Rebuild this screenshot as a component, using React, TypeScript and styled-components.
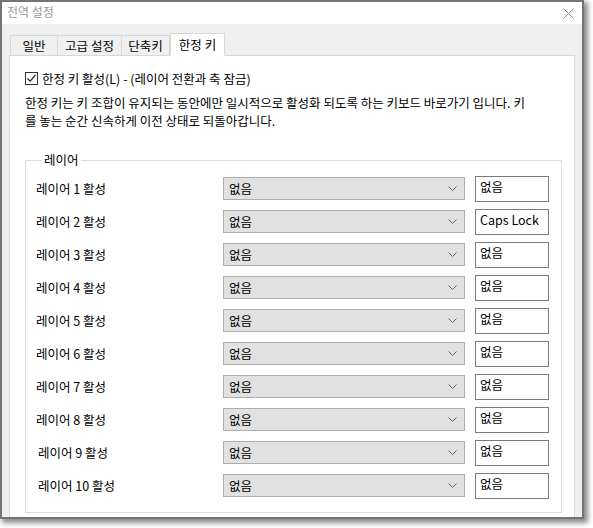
import React from "react";
import styled, { createGlobalStyle } from "styled-components";

const Global = createGlobalStyle`
  html, body { margin: 0; padding: 0; background: #ffffff; }
  body { font-family: "Noto Sans CJK KR", "Noto Sans", sans-serif; font-size: 12px; color: #000; }
  * { box-sizing: border-box; }
`;

const Page = styled.div`
  width: 593px;
  height: 528px;
  overflow: hidden;
`;

const Window = styled.div`
  width: 584px;
  height: 519px;
  border: 2px solid #747474;
  background: #f0f0f0;
  box-shadow: 3px 3px 5px 1px rgba(0, 0, 0, 0.45);
  display: flex;
  flex-direction: column;
  overflow: hidden;
`;

const TitleBar = styled.div`
  height: 22px;
  background: #ffffff;
  display: flex;
  align-items: center;
  justify-content: space-between;
  padding: 0 8px 0 5px;
  flex-shrink: 0;
`;

const Title = styled.span`
  color: #9a9a9a;
  font-size: 12px;
  line-height: 1;
  margin-top: -2px;
`;

const Body = styled.div`
  flex: 1;
  min-height: 0;
  padding: 8px 7px 0 7px;
  display: flex;
  flex-direction: column;
`;

const TabStrip = styled.div`
  display: flex;
  align-items: flex-end;
  height: 23px;
  flex-shrink: 0;
  padding-left: 1px;
  position: relative;
  z-index: 1;
`;

const Tab = styled.div<{ $active?: boolean; $first?: boolean; $w: number }>`
  width: ${(p) => p.$w}px;
  height: ${(p) => (p.$active ? "23px" : "21px")};
  display: flex;
  align-items: center;
  justify-content: center;
  background: ${(p) => (p.$active ? "#ffffff" : "#f0f0f0")};
  border: 1px solid #d9d9d9;
  border-bottom-color: ${(p) => (p.$active ? "#ffffff" : "#d9d9d9")};
  border-left-width: ${(p) => (p.$first || p.$active ? "1px" : "0")};
  margin-bottom: -1px;
  font-size: 12.5px;
  white-space: nowrap;
`;

const Panel = styled.div`
  flex: 1;
  min-height: 0;
  width: 566px;
  background: #ffffff;
  border: 1px solid #d9d9d9;
  border-bottom: none;
  padding: 14px 12px 4px 15px;
  display: flex;
  flex-direction: column;
`;

const CheckRow = styled.label`
  display: flex;
  align-items: center;
  gap: 4px;
  height: 16px;
  font-size: 12.5px;
`;

const Box = styled.span`
  width: 13px;
  height: 13px;
  border: 1px solid #333;
  background: #fff;
  display: inline-flex;
  align-items: center;
  justify-content: center;
`;

const Desc = styled.div`
  margin-top: 8px;
  display: flex;
  flex-direction: column;
`;

const DescLine = styled.div`
  height: 18px;
  line-height: 18px;
  font-size: 12.5px;
  white-space: nowrap;
`;

const Group = styled.fieldset`
  margin: 23px 0 0 0;
  padding: 5px 0 0 10px;
  width: 537px;
  border: 1px solid #dcdcdc;
  flex: 1;
  min-height: 0;
  min-width: 0;
`;

const Legend = styled.legend`
  padding: 0 2px;
  margin-left: 6px;
  font-size: 12.5px;
  line-height: 14px;
  color: #000;
`;

const Rows = styled.div`
  display: flex;
  flex-direction: column;
`;

const Row = styled.div`
  display: flex;
  align-items: center;
  height: 33px;
`;

const RowLabel = styled.div<{ $indent?: number }>`
  width: 187px;
  flex-shrink: 0;
  padding-left: ${(p) => p.$indent ?? 0}px;
  font-size: 12.5px;
  white-space: nowrap;
`;

const Combo = styled.div`
  width: 242px;
  flex-shrink: 0;
  height: 23px;
  background: #e1e1e1;
  border: 1px solid #adadad;
  display: flex;
  align-items: center;
  justify-content: space-between;
  padding: 0 7px 0 5px;
  font-size: 12.5px;
`;

const TextBox = styled.div`
  width: 74px;
  flex-shrink: 0;
  margin-left: 10px;
  height: 26px;
  border: 1px solid #7a7a7a;
  background: #fff;
  padding: 1px 0 0 4px;
  font-size: 12.5px;
  line-height: 18px;
  white-space: nowrap;
`;

const Chevron = () => (
  <svg width="9" height="6" viewBox="0 0 9 6">
    <path d="M0.5 0.5 L4.5 4.5 L8.5 0.5" fill="none" stroke="#606060" strokeWidth="1" />
  </svg>
);

const CloseIcon = () => (
  <svg width="11" height="11" viewBox="0 0 11 11">
    <path d="M0.5 0.5 L10.5 10.5 M10.5 0.5 L0.5 10.5" stroke="#8a8a8a" strokeWidth="1" />
  </svg>
);

const rows = Array.from({ length: 10 }, (_, i) => ({
  n: i + 1,
  key: i === 1 ? "Caps Lock" : "없음",
}));

const tabs = [
  { t: "일반", w: 48 },
  { t: "고급 설정", w: 64 },
  { t: "단축키", w: 48 },
];

export default function App() {
  return (
    <Page>
      <Global />
      <Window>
        <TitleBar>
          <Title>전역 설정</Title>
          <CloseIcon />
        </TitleBar>
        <Body>
          <TabStrip>
            {tabs.map((t, i) => (
              <Tab key={t.t} $w={t.w} $first={i === 0}>
                {t.t}
              </Tab>
            ))}
            <Tab $active $w={55}>
              한정 키
            </Tab>
          </TabStrip>
          <Panel>
            <CheckRow>
              <Box>
                <svg width="11" height="11" viewBox="0 0 11 11">
                  <path d="M1.5 5.5 L4.2 8.2 L9.5 2" fill="none" stroke="#222" strokeWidth="1.2" />
                </svg>
              </Box>
              한정 키 활성(L) - (레이어 전환과 축 잠금)
            </CheckRow>
            <Desc>
              <DescLine>
                한정 키는 키 조합이 유지되는 동안에만 일시적으로 활성화 되도록 하는 키보드 바로가기 입니다. 키
              </DescLine>
              <DescLine>를 놓는 순간 신속하게 이전 상태로 되돌아갑니다.</DescLine>
            </Desc>
            <Group>
              <Legend>레이어</Legend>
              <Rows>
                {rows.map((r) => (
                  <Row key={r.n}>
                    <RowLabel $indent={r.n >= 9 ? 2 : 0}>레이어 {r.n} 활성</RowLabel>
                    <Combo>
                      <span>없음</span>
                      <Chevron />
                    </Combo>
                    <TextBox>{r.key}</TextBox>
                  </Row>
                ))}
              </Rows>
            </Group>
          </Panel>
        </Body>
      </Window>
    </Page>
  );
}
